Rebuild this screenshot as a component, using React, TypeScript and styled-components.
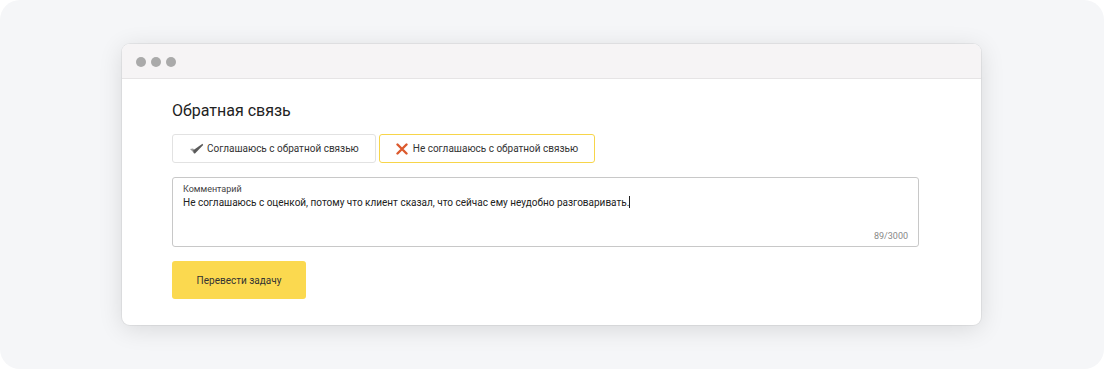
import React from "react";
import styled, { createGlobalStyle } from "styled-components";

const GlobalStyle = createGlobalStyle`
  html, body {
    margin: 0;
    padding: 0;
    background: #ffffff;
  }
  body {
    font-family: "Roboto", "Noto Sans", sans-serif;
    color: #333333;
  }
`;

const Page = styled.div`
  width: 1104px;
  height: 369px;
  box-sizing: border-box;
  background: #f5f6f8;
  border-radius: 20px;
  padding: 44px 0 0 122px;
`;

const Window = styled.div`
  width: 859px;
  height: 281px;
  background: #ffffff;
  border-radius: 8px;
  box-shadow: 0 4px 24px rgba(0, 0, 0, 0.12), 0 0 0 1px rgba(0, 0, 0, 0.05);
  overflow: hidden;
  display: flex;
  flex-direction: column;
`;

const TitleBar = styled.div`
  height: 35px;
  flex-shrink: 0;
  background: #f6f4f5;
  border-bottom: 1px solid #e6e4e5;
  display: flex;
  align-items: center;
  gap: 5px;
  padding: 1px 0 0 14px;
  box-sizing: border-box;
`;

const Dot = styled.span`
  width: 10px;
  height: 10px;
  border-radius: 50%;
  background: #aaaaaa;
`;

const Content = styled.div`
  padding: 22px 0 0 50px;
  display: flex;
  flex-direction: column;
`;

const Title = styled.h2`
  margin: 0;
  font-size: 16px;
  font-weight: 400;
  color: #222222;
  line-height: 19px;
`;

const Choices = styled.div`
  display: flex;
  gap: 3px;
  margin-top: 14px;
`;

const Choice = styled.button<{ $active?: boolean }>`
  height: 29px;
  box-sizing: border-box;
  padding: 0 16px;
  border-radius: 3px;
  border: 1px solid ${(p) => (p.$active ? "#f7d54a" : "#e2e2e2")};
  background: #ffffff;
  display: flex;
  align-items: center;
  gap: ${(p) => (p.$active ? "5px" : "3px")};
  font-family: "Roboto", "Noto Sans", sans-serif;
  font-size: 10px;
  color: #333333;
  cursor: pointer;
`;

const Field = styled.div`
  margin-top: 14px;
  width: 747px;
  height: 70px;
  box-sizing: border-box;
  border: 1px solid #c8c8c8;
  border-radius: 3px;
  padding: 6px 10px 0 10px;
  position: relative;
`;

const FieldLabel = styled.div`
  font-size: 9px;
  color: #444444;
  line-height: 11px;
`;

const FieldValue = styled.div`
  margin-top: 1px;
  font-size: 10px;
  color: #222222;
  line-height: 14px;
`;

const Caret = styled.span`
  display: inline-block;
  width: 1px;
  height: 12px;
  background: #222222;
  vertical-align: -2px;
`;

const Counter = styled.div`
  position: absolute;
  right: 10px;
  bottom: 5px;
  font-size: 9px;
  color: #888888;
`;

const Submit = styled.button`
  margin-top: 14px;
  width: 134px;
  height: 38px;
  border: none;
  border-radius: 3px;
  background: #fbd94f;
  font-family: "Roboto", "Noto Sans", sans-serif;
  font-size: 10px;
  color: #333333;
  cursor: pointer;
`;

function CheckIcon() {
  return (
    <svg width="15" height="11" viewBox="0 0 15 11">
      <path d="M1 6 L4 5.5 L6.5 8 L5.5 10.5 Z" fill="#9a9a9a" />
      <path d="M4.2 7.2 L13.5 0.8 L14.2 2 L6 10.6 L4.8 10.2 Z" fill="#5a5a5a" />
    </svg>
  );
}

function CrossIcon() {
  return (
    <svg width="12" height="12" viewBox="0 0 12 12">
      <path d="M1.5 1.5 L10.5 10.5 M10.5 1.5 L1.5 10.5" stroke="#dc5a2e" strokeWidth="2.4" strokeLinecap="round" />
    </svg>
  );
}

export default function App() {
  return (
    <>
      <GlobalStyle />
      <Page>
        <Window>
          <TitleBar>
            <Dot />
            <Dot />
            <Dot />
          </TitleBar>
          <Content>
            <Title>Обратная связь</Title>
            <Choices>
              <Choice>
                <CheckIcon />
                Соглашаюсь с обратной связью
              </Choice>
              <Choice $active>
                <CrossIcon />
                Не соглашаюсь с обратной связью
              </Choice>
            </Choices>
            <Field>
              <FieldLabel>Комментарий</FieldLabel>
              <FieldValue>
                Не соглашаюсь с оценкой, потому что клиент сказал, что сейчас ему неудобно разговаривать.
                <Caret />
              </FieldValue>
              <Counter>89/3000</Counter>
            </Field>
            <Submit>Перевести задачу</Submit>
          </Content>
        </Window>
      </Page>
    </>
  );
}
